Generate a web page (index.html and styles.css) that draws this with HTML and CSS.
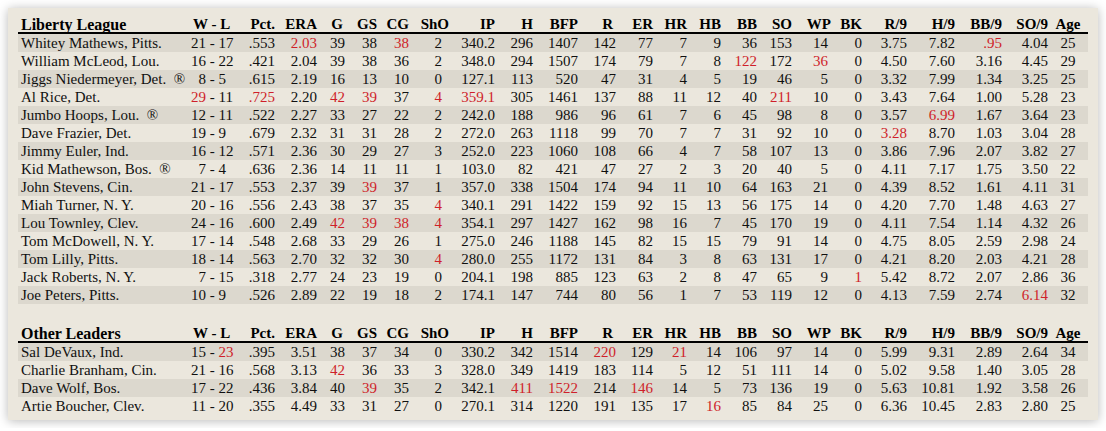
FILE: index.html
```html
<!DOCTYPE html>
<html>
<head>
<meta charset="utf-8">
<link rel="stylesheet" href="styles.css">
</head>
<body>
<div class="card">
<table class="stats">
<colgroup>
<col class="c-name"><col class="c-wl"><col class="c-pct"><col class="c-era"><col class="c-g"><col class="c-gs"><col class="c-cg"><col class="c-sho"><col class="c-ip"><col class="c-h"><col class="c-bfp"><col class="c-r"><col class="c-er"><col class="c-hr"><col class="c-hb"><col class="c-bb"><col class="c-so"><col class="c-wp"><col class="c-bk"><col class="c-r9"><col class="c-h9"><col class="c-bb9"><col class="c-so9"><col class="c-age">
</colgroup>
<thead>
<tr><th class="title">Liberty League</th><th class="wlh">W - L</th><th>Pct.</th><th>ERA</th><th class="gh">G</th><th>GS</th><th>CG</th><th>ShO</th><th>IP</th><th>H</th><th>BFP</th><th class="rh">R</th><th>ER</th><th>HR</th><th>HB</th><th>BB</th><th>SO</th><th>WP</th><th>BK</th><th>R/9</th><th>H/9</th><th>BB/9</th><th>SO/9</th><th class="age">Age</th></tr>
</thead>
<tbody>
<tr><td class="name">Whitey Mathews, Pitts.</td><td class="wl"><span class="w">21</span> - 17</td><td>.553</td><td class="red">2.03</td><td>39</td><td>38</td><td class="red">38</td><td class="sho">2</td><td>340.2</td><td>296</td><td>1407</td><td>142</td><td>77</td><td>7</td><td>9</td><td>36</td><td>153</td><td class="wp">14</td><td>0</td><td>3.75</td><td>7.82</td><td class="red">.95</td><td>4.04</td><td class="age">25</td></tr>
<tr><td class="name">William McLeod, Lou.</td><td class="wl"><span class="w">16</span> - 22</td><td>.421</td><td>2.04</td><td>39</td><td>38</td><td>36</td><td class="sho">2</td><td>348.0</td><td>294</td><td>1507</td><td>174</td><td>79</td><td>7</td><td>8</td><td class="red">122</td><td>172</td><td class="wp red">36</td><td>0</td><td>4.50</td><td>7.60</td><td>3.16</td><td>4.45</td><td class="age">29</td></tr>
<tr><td class="name">Jiggs Niedermeyer, Det. &nbsp;®</td><td class="wl"><span class="w">8</span> - 5</td><td>.615</td><td>2.19</td><td>16</td><td>13</td><td>10</td><td class="sho">0</td><td>127.1</td><td>113</td><td>520</td><td>47</td><td>31</td><td>4</td><td>5</td><td>19</td><td>46</td><td class="wp">5</td><td>0</td><td>3.32</td><td>7.99</td><td>1.34</td><td>3.25</td><td class="age">25</td></tr>
<tr><td class="name">Al Rice, Det.</td><td class="wl"><span class="w red">29</span> - 11</td><td class="red">.725</td><td>2.20</td><td class="red">42</td><td class="red">39</td><td>37</td><td class="sho red">4</td><td class="red">359.1</td><td>305</td><td>1461</td><td>137</td><td>88</td><td>11</td><td>12</td><td>40</td><td class="red">211</td><td class="wp">10</td><td>0</td><td>3.43</td><td>7.64</td><td>1.00</td><td>5.28</td><td class="age">23</td></tr>
<tr><td class="name">Jumbo Hoops, Lou. &nbsp;®</td><td class="wl"><span class="w">12</span> - 11</td><td>.522</td><td>2.27</td><td>33</td><td>27</td><td>22</td><td class="sho">2</td><td>242.0</td><td>188</td><td>986</td><td>96</td><td>61</td><td>7</td><td>6</td><td>45</td><td>98</td><td class="wp">8</td><td>0</td><td>3.57</td><td class="red">6.99</td><td>1.67</td><td>3.64</td><td class="age">23</td></tr>
<tr><td class="name">Dave Frazier, Det.</td><td class="wl"><span class="w">19</span> - 9</td><td>.679</td><td>2.32</td><td>31</td><td>31</td><td>28</td><td class="sho">2</td><td>272.0</td><td>263</td><td>1118</td><td>99</td><td>70</td><td>7</td><td>7</td><td>31</td><td>92</td><td class="wp">10</td><td>0</td><td class="red">3.28</td><td>8.70</td><td>1.03</td><td>3.04</td><td class="age">28</td></tr>
<tr><td class="name">Jimmy Euler, Ind.</td><td class="wl"><span class="w">16</span> - 12</td><td>.571</td><td>2.36</td><td>30</td><td>29</td><td>27</td><td class="sho">3</td><td>252.0</td><td>223</td><td>1060</td><td>108</td><td>66</td><td>4</td><td>7</td><td>58</td><td>107</td><td class="wp">13</td><td>0</td><td>3.86</td><td>7.96</td><td>2.07</td><td>3.82</td><td class="age">27</td></tr>
<tr><td class="name">Kid Mathewson, Bos. &nbsp;®</td><td class="wl"><span class="w">7</span> - 4</td><td>.636</td><td>2.36</td><td>14</td><td>11</td><td>11</td><td class="sho">1</td><td>103.0</td><td>82</td><td>421</td><td>47</td><td>27</td><td>2</td><td>3</td><td>20</td><td>40</td><td class="wp">5</td><td>0</td><td>4.11</td><td>7.17</td><td>1.75</td><td>3.50</td><td class="age">22</td></tr>
<tr><td class="name">John Stevens, Cin.</td><td class="wl"><span class="w">21</span> - 17</td><td>.553</td><td>2.37</td><td>39</td><td class="red">39</td><td>37</td><td class="sho">1</td><td>357.0</td><td>338</td><td>1504</td><td>174</td><td>94</td><td>11</td><td>10</td><td>64</td><td>163</td><td class="wp">21</td><td>0</td><td>4.39</td><td>8.52</td><td>1.61</td><td>4.11</td><td class="age">31</td></tr>
<tr><td class="name">Miah Turner, N. Y.</td><td class="wl"><span class="w">20</span> - 16</td><td>.556</td><td>2.43</td><td>38</td><td>37</td><td>35</td><td class="sho red">4</td><td>340.1</td><td>291</td><td>1422</td><td>159</td><td>92</td><td>15</td><td>13</td><td>56</td><td>175</td><td class="wp">14</td><td>0</td><td>4.20</td><td>7.70</td><td>1.48</td><td>4.63</td><td class="age">27</td></tr>
<tr><td class="name">Lou Townley, Clev.</td><td class="wl"><span class="w">24</span> - 16</td><td>.600</td><td>2.49</td><td class="red">42</td><td class="red">39</td><td class="red">38</td><td class="sho red">4</td><td>354.1</td><td>297</td><td>1427</td><td>162</td><td>98</td><td>16</td><td>7</td><td>45</td><td>170</td><td class="wp">19</td><td>0</td><td>4.11</td><td>7.54</td><td>1.14</td><td>4.32</td><td class="age">26</td></tr>
<tr><td class="name">Tom McDowell, N. Y.</td><td class="wl"><span class="w">17</span> - 14</td><td>.548</td><td>2.68</td><td>33</td><td>29</td><td>26</td><td class="sho">1</td><td>275.0</td><td>246</td><td>1188</td><td>145</td><td>82</td><td>15</td><td>15</td><td>79</td><td>91</td><td class="wp">14</td><td>0</td><td>4.75</td><td>8.05</td><td>2.59</td><td>2.98</td><td class="age">24</td></tr>
<tr><td class="name">Tom Lilly, Pitts.</td><td class="wl"><span class="w">18</span> - 14</td><td>.563</td><td>2.70</td><td>32</td><td>32</td><td>30</td><td class="sho red">4</td><td>280.0</td><td>255</td><td>1172</td><td>131</td><td>84</td><td>3</td><td>8</td><td>63</td><td>131</td><td class="wp">17</td><td>0</td><td>4.21</td><td>8.20</td><td>2.03</td><td>4.21</td><td class="age">28</td></tr>
<tr><td class="name">Jack Roberts, N. Y.</td><td class="wl"><span class="w">7</span> - 15</td><td>.318</td><td>2.77</td><td>24</td><td>23</td><td>19</td><td class="sho">0</td><td>204.1</td><td>198</td><td>885</td><td>123</td><td>63</td><td>2</td><td>8</td><td>47</td><td>65</td><td class="wp">9</td><td class="red">1</td><td>5.42</td><td>8.72</td><td>2.07</td><td>2.86</td><td class="age">36</td></tr>
<tr><td class="name">Joe Peters, Pitts.</td><td class="wl"><span class="w">10</span> - 9</td><td>.526</td><td>2.89</td><td>22</td><td>19</td><td>18</td><td class="sho">2</td><td>174.1</td><td>147</td><td>744</td><td>80</td><td>56</td><td>1</td><td>7</td><td>53</td><td>119</td><td class="wp">12</td><td>0</td><td>4.13</td><td>7.59</td><td>2.74</td><td class="red">6.14</td><td class="age">32</td></tr>
</tbody>
</table>

<table class="stats second">
<colgroup>
<col class="c-name"><col class="c-wl"><col class="c-pct"><col class="c-era"><col class="c-g"><col class="c-gs"><col class="c-cg"><col class="c-sho"><col class="c-ip"><col class="c-h"><col class="c-bfp"><col class="c-r"><col class="c-er"><col class="c-hr"><col class="c-hb"><col class="c-bb"><col class="c-so"><col class="c-wp"><col class="c-bk"><col class="c-r9"><col class="c-h9"><col class="c-bb9"><col class="c-so9"><col class="c-age">
</colgroup>
<thead>
<tr><th class="title">Other Leaders</th><th class="wlh">W - L</th><th>Pct.</th><th>ERA</th><th class="gh">G</th><th>GS</th><th>CG</th><th>ShO</th><th>IP</th><th>H</th><th>BFP</th><th class="rh">R</th><th>ER</th><th>HR</th><th>HB</th><th>BB</th><th>SO</th><th>WP</th><th>BK</th><th>R/9</th><th>H/9</th><th>BB/9</th><th>SO/9</th><th class="age">Age</th></tr>
</thead>
<tbody>
<tr><td class="name">Sal DeVaux, Ind.</td><td class="wl"><span class="w">15</span> - <span class="red">23</span></td><td>.395</td><td>3.51</td><td>38</td><td>37</td><td>34</td><td class="sho">0</td><td>330.2</td><td>342</td><td>1514</td><td class="red">220</td><td>129</td><td class="red">21</td><td>14</td><td>106</td><td>97</td><td class="wp">14</td><td>0</td><td>5.99</td><td>9.31</td><td>2.89</td><td>2.64</td><td class="age">34</td></tr>
<tr><td class="name">Charlie Branham, Cin.</td><td class="wl"><span class="w">21</span> - 16</td><td>.568</td><td>3.13</td><td class="red">42</td><td>36</td><td>33</td><td class="sho">3</td><td>328.0</td><td>349</td><td>1419</td><td>183</td><td>114</td><td>5</td><td>12</td><td>51</td><td>111</td><td class="wp">14</td><td>0</td><td>5.02</td><td>9.58</td><td>1.40</td><td>3.05</td><td class="age">28</td></tr>
<tr><td class="name">Dave Wolf, Bos.</td><td class="wl"><span class="w">17</span> - 22</td><td>.436</td><td>3.84</td><td>40</td><td class="red">39</td><td>35</td><td class="sho">2</td><td>342.1</td><td class="red">411</td><td class="red">1522</td><td>214</td><td class="red">146</td><td>14</td><td>5</td><td>73</td><td>136</td><td class="wp">19</td><td>0</td><td>5.63</td><td>10.81</td><td>1.92</td><td>3.58</td><td class="age">26</td></tr>
<tr><td class="name">Artie Boucher, Clev.</td><td class="wl"><span class="w">11</span> - 20</td><td>.355</td><td>4.49</td><td>33</td><td>31</td><td>27</td><td class="sho">0</td><td>270.1</td><td>314</td><td>1220</td><td>191</td><td>135</td><td>17</td><td class="red">16</td><td>85</td><td>84</td><td class="wp">25</td><td>0</td><td>6.36</td><td>10.45</td><td>2.83</td><td>2.80</td><td class="age">25</td></tr>
</tbody>
</table>
</div>
</body>
</html>
```

FILE: styles.css
```css
html, body {
  margin: 0;
  padding: 0;
  background: #ffffff;
}

.card {
  margin: 8px;
  padding: 4px 10px 5px 10px;
  background: #ebe7dd;
  box-shadow: 0 1px 10px rgba(0, 0, 0, 0.28);
  font-family: "Liberation Serif", "Times New Roman", serif;
  color: #101010;
}

.stats {
  table-layout: fixed;
  width: 1070px;
  border-collapse: separate;
  border-spacing: 0;
  font-size: 15px;
}

.second {
  margin-top: 17px;
}

.stats th {
  box-sizing: border-box;
  height: 22px;
  padding: 0;
  border-bottom: 2px solid #000;
  font-weight: bold;
  font-size: 15px;
  line-height: 15px;
  color: #000;
  text-align: right;
  vertical-align: bottom;
  white-space: nowrap;
}

.stats th.title {
  text-align: left;
  font-size: 16px;
  padding-left: 3px;
}

.stats th.wlh {
  text-align: left;
  padding-left: 8px;
}

.stats th.gh {
  padding-right: 2px;
}

.stats th.rh {
  padding-right: 3px;
}

.stats td {
  height: 18px;
  padding: 0;
  line-height: 18px;
  text-align: right;
  white-space: nowrap;
  vertical-align: middle;
}

.stats tbody tr:nth-child(odd) td {
  background: #dcd8ce;
}

.stats td.name {
  text-align: left;
  padding-left: 3px;
}

.stats td.wl {
  text-align: left;
}

.w {
  display: inline-block;
  width: 21px;
  text-align: right;
}

.stats td.sho {
  padding-right: 7px;
}

.stats td.wp {
  padding-right: 3px;
}

.stats .age,
.stats th.age {
  text-align: center;
}

.red {
  color: #cf1f2a;
}

.c-name { width: 167px; }
.c-wl { width: 53px; }
.c-pct { width: 37px; }
.c-era { width: 42px; }
.c-g { width: 28px; }
.c-gs { width: 32px; }
.c-cg { width: 32px; }
.c-sho { width: 40px; }
.c-ip { width: 46px; }
.c-h { width: 38px; }
.c-bfp { width: 45px; }
.c-r { width: 38px; }
.c-er { width: 37px; }
.c-hr { width: 34px; }
.c-hb { width: 34px; }
.c-bb { width: 36px; }
.c-so { width: 35px; }
.c-wp { width: 39px; }
.c-bk { width: 31px; }
.c-r9 { width: 45px; }
.c-h9 { width: 48px; }
.c-bb9 { width: 47px; }
.c-so9 { width: 46px; }
.c-age { width: 40px; }
```
